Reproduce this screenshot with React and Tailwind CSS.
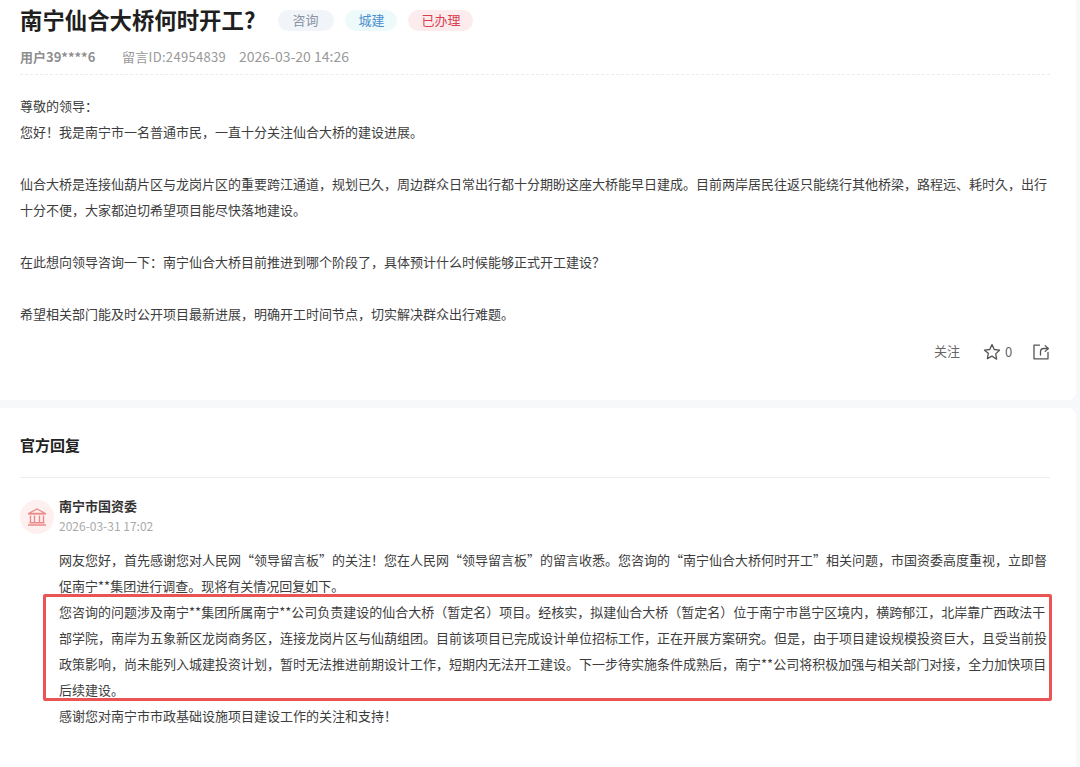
import React from "react";

// Body copy uses full-width CJK punctuation throughout.
const MAP = { ",": "\uFF0C", "!": "\uFF01", ":": "\uFF1A", "(": "\uFF08", ")": "\uFF09", "?": "\uFF1F" };
const fw = (s) => s.replace(/[,!:()?]/g, (c) => MAP[c]);

function L({ t = "" }) {
  return <div className="h-[26px] leading-[26px] whitespace-nowrap">{fw(t)}</div>;
}

function Tag({ className, children }) {
  return (
    <span className={`h-[21px] rounded-full text-[13px] leading-[20px] text-center ${className}`}>{children}</span>
  );
}

export default function App() {
  return (
    <div className="w-[1080px] h-[767px] overflow-hidden bg-[#f7f8fa] font-['Noto_Sans_CJK_SC',sans-serif] text-[13px] text-[#333333]">
      <section className="w-[1076px] h-[400px] bg-white rounded-br-lg pl-5 pr-[26px]">
        <div className="flex items-center h-[40px]">
          <h1 className="text-[22.4px] leading-[30px] font-bold text-[#1f1f1f] whitespace-nowrap pb-[2px]">南宁仙合大桥何时开工?</h1>
          <div className="flex gap-[11px] ml-[23px]">
            <Tag className="w-[56px] pr-[2px] bg-[#f1f4f8] text-[#8a94a6]">咨询</Tag>
            <Tag className="w-[52px] bg-[#eefafa] text-[#4a8ed0]">城建</Tag>
            <Tag className="w-[65px] bg-[#fdecee] text-[#d9404f]">已办理</Tag>
          </div>
        </div>
        <div className="flex items-center h-[17px] mt-[8px] text-[#999999] leading-[17px] whitespace-nowrap">
          <span className="w-[102px] font-semibold text-[#8f8f8f]">用户39****6</span>
          <span className="w-[117px] tracking-[0.3px]">留言ID:24954839</span>
          <span className="text-[14px]">2026-03-20 14:26</span>
        </div>
        <div className="mt-[9px] border-t border-dashed border-[#ececec]" />
        <div className="mt-[18px] text-[#3d3d3d]">
          <L t="尊敬的领导:" />
          <L t="您好!我是南宁市一名普通市民,一直十分关注仙合大桥的建设进展。" />
          <L />
          <L t="仙合大桥是连接仙葫片区与龙岗片区的重要跨江通道,规划已久,周边群众日常出行都十分期盼这座大桥能早日建成。目前两岸居民往返只能绕行其他桥梁,路程远、耗时久,出行" />
          <L t="十分不便,大家都迫切希望项目能尽快落地建设。" />
          <L />
          <L t="在此想向领导咨询一下:南宁仙合大桥目前推进到哪个阶段了,具体预计什么时候能够正式开工建设?" />
          <L />
          <L t="希望相关部门能及时公开项目最新进展,明确开工时间节点,切实解决群众出行难题。" />
        </div>
        <div className="flex items-center justify-end h-[20px] mt-[15px] text-[#666666]">
          <span className="pb-[2px]">关注</span>
          <svg className="ml-[23px]" width="18" height="18" viewBox="0 0 18 18" fill="none" stroke="#555" strokeWidth="1.3" strokeLinejoin="round">
            <path d="M9 1.6l2.3 4.9 5.2.7-3.8 3.7.95 5.3L9 13.1l-4.65 2.5.95-5.3L1.5 7.2l5.2-.7z" />
          </svg>
          <span className="ml-[4px] w-[8px]">0</span>
          <svg className="ml-[19px]" width="18" height="18" viewBox="0 0 18 18" fill="none" stroke="#555" strokeWidth="1.3" strokeLinecap="round" strokeLinejoin="round">
            <path d="M7.5 2.2H2v13.6h14V9.5" />
            <path d="M8.5 12V8.8c0-2 1.3-3.3 3.3-3.3H16" />
            <path d="M13.2 2.6L16.3 5.5l-3.1 2.9" />
          </svg>
        </div>
      </section>

      <section className="w-[1076px] h-[359px] mt-[8px] bg-white rounded-tr-lg pl-5 pr-[26px] pt-[25px]">
        <h2 className="text-[15px] leading-[24px] font-semibold text-[#222222]">官方回复</h2>
        <div className="mt-[20px] border-t border-[#eeeeee]" />
        <div className="flex items-start mt-[22px]">
          <div className="flex items-center justify-center w-[34px] h-[34px] rounded-full bg-[#fdf0ef]">
            <svg width="20" height="18" viewBox="0 0 20 18" fill="none" stroke="#ea8a8a" strokeWidth="1.4">
              <path d="M1.5 5.5L10 1l8.5 4.5z" />
              <path d="M1 5.8h18M3.5 7.5v6.5M7.5 7.5v6.5M12.5 7.5v6.5M16.5 7.5v6.5M2.5 14.8h15M1 17h18" />
            </svg>
          </div>
          <div className="ml-[5px] -mt-[2px]">
            <div className="text-[13px] leading-[16px] font-semibold text-[#333333] whitespace-nowrap">南宁市国资委</div>
            <div className="mt-[4px] text-[12px] leading-[16px] text-[#aaaaaa]">2026-03-31 17:02</div>
          </div>
        </div>
        <div className="relative mt-[13px] ml-[39px] text-[#3d3d3d]">
          <L t="网友您好,首先感谢您对人民网“领导留言板”的关注!您在人民网“领导留言板”的留言收悉。您咨询的“南宁仙合大桥何时开工”相关问题,市国资委高度重视,立即督" />
          <L t="促南宁**集团进行调查。现将有关情况回复如下。" />
          <L t="您咨询的问题涉及南宁**集团所属南宁**公司负责建设的仙合大桥(暂定名)项目。经核实,拟建仙合大桥(暂定名)位于南宁市邕宁区境内,横跨郁江,北岸靠广西政法干" />
          <L t="部学院,南岸为五象新区龙岗商务区,连接龙岗片区与仙葫组团。目前该项目已完成设计单位招标工作,正在开展方案研究。但是,由于项目建设规模投资巨大,且受当前投" />
          <L t="政策影响,尚未能列入城建投资计划,暂时无法推进前期设计工作,短期内无法开工建设。下一步待实施条件成熟后,南宁**公司将积极加强与相关部门对接,全力加快项目" />
          <L t="后续建设。" />
          <L t="感谢您对南宁市市政基础设施项目建设工作的关注和支持!" />
          <div className="absolute left-[-16px] top-[47px] w-[1009px] h-[107px] border-[3px] border-[#ea5455] rounded-[2px] pointer-events-none" />
        </div>
      </section>
    </div>
  );
}
